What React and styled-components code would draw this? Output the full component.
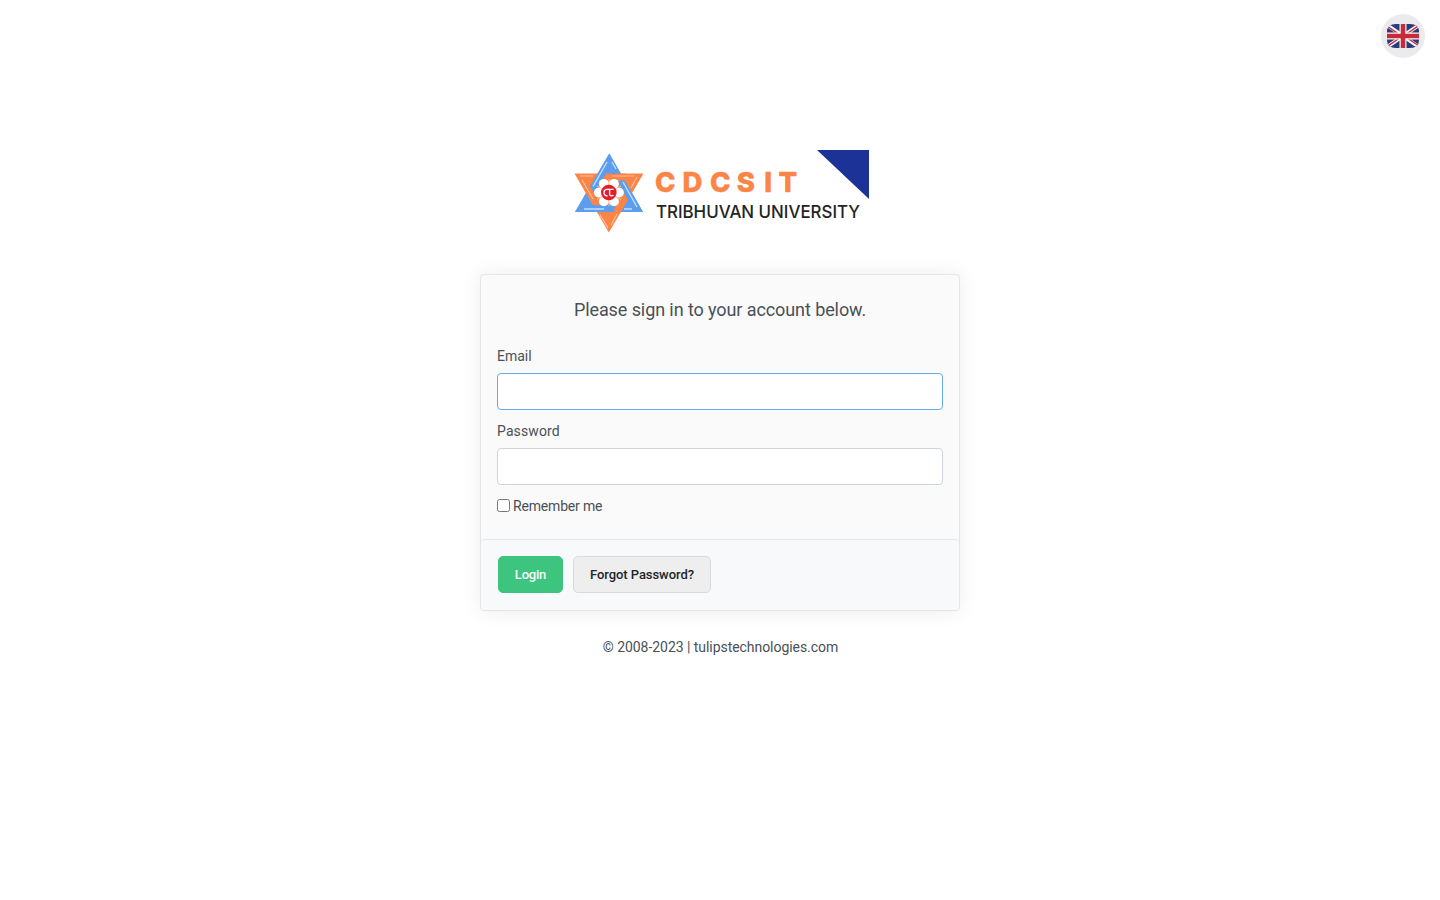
import React from 'react';
import styled, { createGlobalStyle } from 'styled-components';

const GlobalStyle = createGlobalStyle`
  *, *::before, *::after { box-sizing: border-box; }
  body {
    margin: 0;
    background: #fff;
    color: #495057;
    font: 400 14px/21px Roboto, "Liberation Sans", sans-serif;
  }
`;

const Page = styled.div`
  position: relative;
  min-height: 900px;
  display: flex;
  flex-direction: column;
  align-items: center;
  padding-top: 150px;
`;

const LanguageButton = styled.button`
  position: absolute;
  top: 14px;
  right: 15px;
  width: 44px;
  height: 44px;
  display: flex;
  align-items: center;
  justify-content: center;
  padding: 0;
  border: 0;
  border-radius: 50%;
  background: #ebebed;
`;

const Brand = styled.svg`
  display: block;
  width: 298px;
  height: 88px;
  margin-bottom: 36px;
`;

const Card = styled.form`
  width: 480px;
  border: 1px solid #e5e6e8;
  border-radius: 4px;
  background: #fafafa;
  box-shadow: 0 0 20px rgba(0, 0, 0, 0.08);
`;

const CardBody = styled.div`
  height: 264px;
  padding: 21px 16px 0;
`;

const Heading = styled.h1`
  margin: 0 0 23px;
  font-size: 18px;
  font-weight: 400;
  line-height: 27px;
  letter-spacing: -0.09px;
  text-align: center;
`;

const Field = styled.label`
  display: block;
  margin-bottom: 11px;
`;

const FieldLabel = styled.span`
  display: block;
  margin-bottom: 6px;
  letter-spacing: ${({ $tracking }) => $tracking || 'normal'};
`;

const Input = styled.input`
  display: block;
  width: 100%;
  height: 37px;
  padding: 6px 12px;
  border: 1px solid ${({ $active }) => ($active ? '#66a9ef' : '#ced4da')};
  border-radius: 4px;
  background: #fff;
  outline: 0;
  font: inherit;
`;

const Remember = styled.label`
  display: flex;
  align-items: center;
  gap: 3px;
  letter-spacing: -0.17px;
`;

const Checkbox = styled.input`
  width: 13px;
  height: 13px;
  margin: 0 0 2px;
`;

const CardFooter = styled.div`
  display: flex;
  gap: 10px;
  height: 71px;
  padding: 16px 17px;
  border-top: 1px solid #e6e8ea;
  border-radius: 4px;
  background: #f8f9fb;
`;

const Button = styled.button`
  width: ${({ $width }) => $width};
  height: 37px;
  padding: 0;
  border: 1px solid ${({ $primary }) => ($primary ? '#3dc47e' : '#dadada')};
  border-radius: 5px;
  background: ${({ $primary }) => ($primary ? '#3dc47e' : '#eee')};
  color: ${({ $primary }) => ($primary ? '#fff' : '#212529')};
  font: 500 13px/20px Roboto, "Liberation Sans", sans-serif;
  letter-spacing: ${({ $primary }) => ($primary ? '-0.2px' : '-0.07px')};
`;

const Copyright = styled.footer`
  margin-top: 26px;
  padding-left: 1px;
  letter-spacing: -0.05px;
`;

function Flag() {
  return (
    <svg width="32" height="24" viewBox="0 0 32 24" aria-label="English">
      <clipPath id="flag-shape">
        <path d="M9 0H23Q32 0 32 8V16Q32 24 23 24H9Q0 24 0 16V8Q0 0 9 0Z" />
      </clipPath>
      <g clipPath="url(#flag-shape)">
        <path fill="#293b79" d="M0 0h32v24H0z" />
        <path stroke="#f8f8f8" strokeWidth="3.8" d="M0 1l32 22M32 1L0 23" />
        <path stroke="#ca2b39" strokeWidth="1.4" d="M0 2l14 9.6M32 1.4L18 11M0 22.6l14-9.6M32 22L18 12.4" />
        <path stroke="#f8f8f8" strokeWidth="7" d="M16 0v24M0 12h32" />
        <path stroke="#ca2b39" strokeWidth="4.5" d="M16 0v24M0 12h32" />
      </g>
    </svg>
  );
}

const ORANGE_TRIANGLE = 'M574.5 173.5H643.5L608.8 232.5ZM586.5 180.5L608.8 218L631 180.5Z';
const BLUE_TRIANGLE = 'M609.3 153.5L643 212H575ZM609.3 168L587.6 205H631Z';

function Logo() {
  return (
    <Brand viewBox="571 150 298 88" role="img" aria-label="CDCSIT Tribhuvan University">
      <clipPath id="strap-crossings">
        <circle cx="620" cy="178" r="7" />
        <circle cx="620" cy="207" r="7" />
        <circle cx="590" cy="193" r="7" />
      </clipPath>
      <path fill="#1c3297" d="M817 150H869V199Z" />
      <path fill="#5c9ded" d="M609.3 153.5L643 212H575Z" />
      <path fill="#fb8547" d="M574.5 173.5H643.5L608.8 232.5Z" />
      <path fill="#5c9ded" fillRule="evenodd" d={BLUE_TRIANGLE} />
      <path fill="#fb8547" fillRule="evenodd" clipPath="url(#strap-crossings)" d={ORANGE_TRIANGLE} />
      <g fill="#fff">
        <circle cx="603.8" cy="183.8" r="4.9" />
        <circle cx="614" cy="183.8" r="4.9" />
        <circle cx="598.8" cy="192.6" r="4.9" />
        <circle cx="619" cy="192.6" r="4.9" />
        <circle cx="603.8" cy="201.4" r="4.9" />
        <circle cx="614" cy="201.4" r="4.9" />
      </g>
      <path stroke="#ffd9c4" strokeWidth=".7" d="M609 179V206M597 186L621 199.5M621 186L597 199.5" />
      <circle cx="608.8" cy="192.5" r="7.8" fill="#e51d2b" />
      <path fill="none" stroke="#fff" strokeWidth="1.3" d="M613.5 189.3H607Q604 189.3 604 192.4T607.5 196M609.6 189.5V194.3Q609.6 196.6 613.5 195.4" />
      <g fill="none" stroke="#c3deff" strokeWidth="1.4">
        <path d="M593 186.5L607 162M612 162L616 169M623 182L637 207M584 209H604M624 209H632" />
      </g>
      <g fill="none" stroke="#ffc29d" strokeWidth="1.1">
        <path d="M580 176H593M612 176H634M582 180L593 199M637 177L631 188M600 215L608 228M611 225L617 214" />
      </g>
      <text
        x="655 682.5 710 736.8 764.2 778.6"
        y="191.7"
        fill="#fb8547"
        stroke="#fb8547"
        strokeWidth=".5"
        fontFamily="Inter, sans-serif"
        fontWeight="800"
        fontSize="27.5"
      >CDCSIT</text>
      <text
        x="656"
        y="218.2"
        fill="#242424"
        fontFamily="Inter, sans-serif"
        fontWeight="500"
        fontSize="17.4"
        textLength="204"
        lengthAdjust="spacingAndGlyphs"
      >TRIBHUVAN UNIVERSITY</text>
    </Brand>
  );
}

export default function App() {
  return (
    <>
      <GlobalStyle />
      <Page>
        <LanguageButton type="button" aria-label="Language"><Flag /></LanguageButton>
        <Logo />
        <Card onSubmit={(event) => event.preventDefault()}>
          <CardBody>
            <Heading>Please sign in to your account below.</Heading>
            <Field>
              <FieldLabel>Email</FieldLabel>
              <Input type="email" $active />
            </Field>
            <Field>
              <FieldLabel $tracking="0.12px">Password</FieldLabel>
              <Input type="password" />
            </Field>
            <Remember><Checkbox type="checkbox" />Remember me</Remember>
          </CardBody>
          <CardFooter>
            <Button $primary $width="65px">Login</Button>
            <Button type="button" $width="138px">Forgot Password?</Button>
          </CardFooter>
        </Card>
        <Copyright>© 2008-2023 | tulipstechnologies.com</Copyright>
      </Page>
    </>
  );
}
